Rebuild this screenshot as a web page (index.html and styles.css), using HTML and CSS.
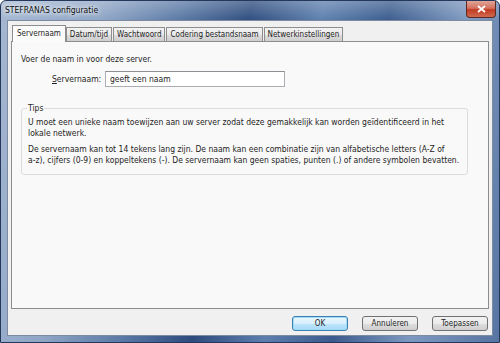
FILE: index.html
```html
<!DOCTYPE html>
<html lang="nl">
<head>
    <meta charset="UTF-8">
    <title>STEFRANAS configuratie</title>
    <link rel="stylesheet" href="styles.css">
</head>
<body>
    <div class="window">
        <div class="titlebar">
            <span class="title">STEFRANAS configuratie</span>
            <button class="close" type="button">
                <svg width="9" height="8" viewBox="0 0 9 8"><path d="M1 1 L8 7 M8 1 L1 7" stroke="#fff" stroke-width="1.8"/></svg>
            </button>
        </div>

        <div class="client">
            <div class="tabs">
                <div class="tab active">Servernaam</div>
                <div class="tab">Datum/tijd</div>
                <div class="tab">Wachtwoord</div>
                <div class="tab">Codering bestandsnaam</div>
                <div class="tab">Netwerkinstellingen</div>
            </div>

            <div class="panel">
                <p class="intro">Voer de naam in voor deze server.</p>

                <div class="field">
                    <label for="servername"><u>S</u>ervernaam:</label>
                    <input type="text" id="servername" value="geeft een naam">
                </div>

                <fieldset class="group">
                    <legend>Tips</legend>
                    <p>U moet een unieke naam toewijzen aan uw server zodat deze gemakkelijk kan worden geïdentificeerd in het lokale netwerk.</p>
                    <p>De servernaam kan tot 14 tekens lang zijn. De naam kan een combinatie zijn van alfabetische letters (A-Z of <span class="nowrap">a-z),</span> cijfers (0-9) en koppeltekens (-). De servernaam kan geen spaties, punten (.) of andere symbolen bevatten.</p>
                </fieldset>
            </div>

            <div class="buttons">
                <button class="btn default" type="button">OK</button>
                <button class="btn" type="button">Annuleren</button>
                <button class="btn" type="button">Toepassen</button>
            </div>
        </div>
    </div>
</body>
</html>
```

FILE: styles.css
```css
body {
    margin: 0;
    width: 500px;
    height: 343px;
    overflow: hidden;
    font-family: "DejaVu Sans Condensed", "Liberation Sans", Arial, sans-serif;
    font-size: 8.5px;
    color: #1e1e1e;
}

.window {
    display: flex;
    flex-direction: column;
    height: 343px;
    box-sizing: border-box;
    padding: 0 6px 6px 6px;
    background:
        linear-gradient(180deg, rgba(255, 255, 255, 0.25) 0, rgba(255, 255, 255, 0) 20px),
        linear-gradient(100deg, #a4b7d2 0%, #8fa6c6 18%, #5c7aa6 32%, #2d4c7e 45%, #5d7fae 58%, #3a5b8d 70%, #7e99c0 84%, #5774a2 100%);
    border: 1px solid #25375a;
    border-radius: 6px 6px 0 0;
}

.titlebar {
    display: flex;
    justify-content: space-between;
    align-items: flex-start;
    height: 19px;
}

.title {
    margin: 4px 0 0 -2px;
    color: #101010;
    text-shadow: 0 0 4px #fff, 0 0 6px #fff;
}

.close {
    width: 30px;
    height: 17px;
    margin-right: -3px;
    padding: 0;
    border: 1px solid #5c2a23;
    border-top: none;
    border-radius: 0 0 4px 4px;
    background: linear-gradient(180deg, #e0a598 0%, #d5715f 45%, #c13a22 55%, #d06a4f 100%);
    display: flex;
    align-items: center;
    justify-content: center;
}

.client {
    flex: 1;
    display: flex;
    flex-direction: column;
    background: #f0f0f0;
    border: 1px solid #7d8ba0;
    padding: 4px 3px 4px 3px;
}

.tabs {
    display: flex;
    padding-left: 3px;
    height: 16px;
    align-items: flex-end;
    font-size: 8px;
}

.tab {
    height: 13px;
    line-height: 13px;
    padding: 0 3px;
    margin-right: 1px;
    border: 1px solid #8d8d8d;
    border-bottom: none;
    background: linear-gradient(180deg, #f2f2f2 0%, #ebebeb 50%, #dddddd 51%, #cfcfcf 100%);
}

.tab.active {
    height: 16px;
    line-height: 15px;
    margin: 0 0 -1px -2px;
    padding: 0 4px;
    background: #fbfbfb;
    position: relative;
}

.panel {
    flex: 1;
    background: #f9f9f9;
    border: 1px solid #8d8d8d;
    padding: 10px 20px 0 9px;
}

.intro {
    margin: 2px 0 0 0;
}

.field {
    display: flex;
    align-items: center;
    margin: 7px 0 0 31px;
}

.field label {
    width: 53px;
}

.field input {
    width: 180px;
    height: 16px;
    box-sizing: border-box;
    padding: 0 4px;
    border: 1px solid #abadb3;
    border-top-color: #8d8f95;
    background: #fff;
    font-family: inherit;
    font-size: 8.5px;
    color: #1e1e1e;
}

.group {
    margin: 16px 0 0 0;
    padding: 4px 6px 8px 6px;
    border: 1px solid #dcdcdc;
    border-radius: 3px;
}

.group legend {
    padding: 0 1px;
    margin-left: -1px;
}

.group p {
    margin: 0 0 5px 0;
    line-height: 11px;
}

.group p:last-child {
    margin-bottom: 0;
}

.nowrap {
    white-space: nowrap;
}

.buttons {
    display: flex;
    justify-content: flex-end;
    gap: 14px;
    padding: 7px 1px 0 0;
}

.btn {
    width: 56px;
    height: 15px;
    padding: 0;
    border: 1px solid #707070;
    border-radius: 3px;
    background: linear-gradient(180deg, #f2f2f2 0%, #ebebeb 50%, #dddddd 51%, #cfcfcf 100%);
    font-family: inherit;
    font-size: 8px;
    color: #1e1e1e;
}

.btn.default {
    border-color: #3c7fb1;
    background: linear-gradient(180deg, #eaf6fd 0%, #d9f0fc 50%, #bee6fd 51%, #a7d9f5 100%);
    box-shadow: inset 0 0 0 1px #9fdcf7;
}
```
